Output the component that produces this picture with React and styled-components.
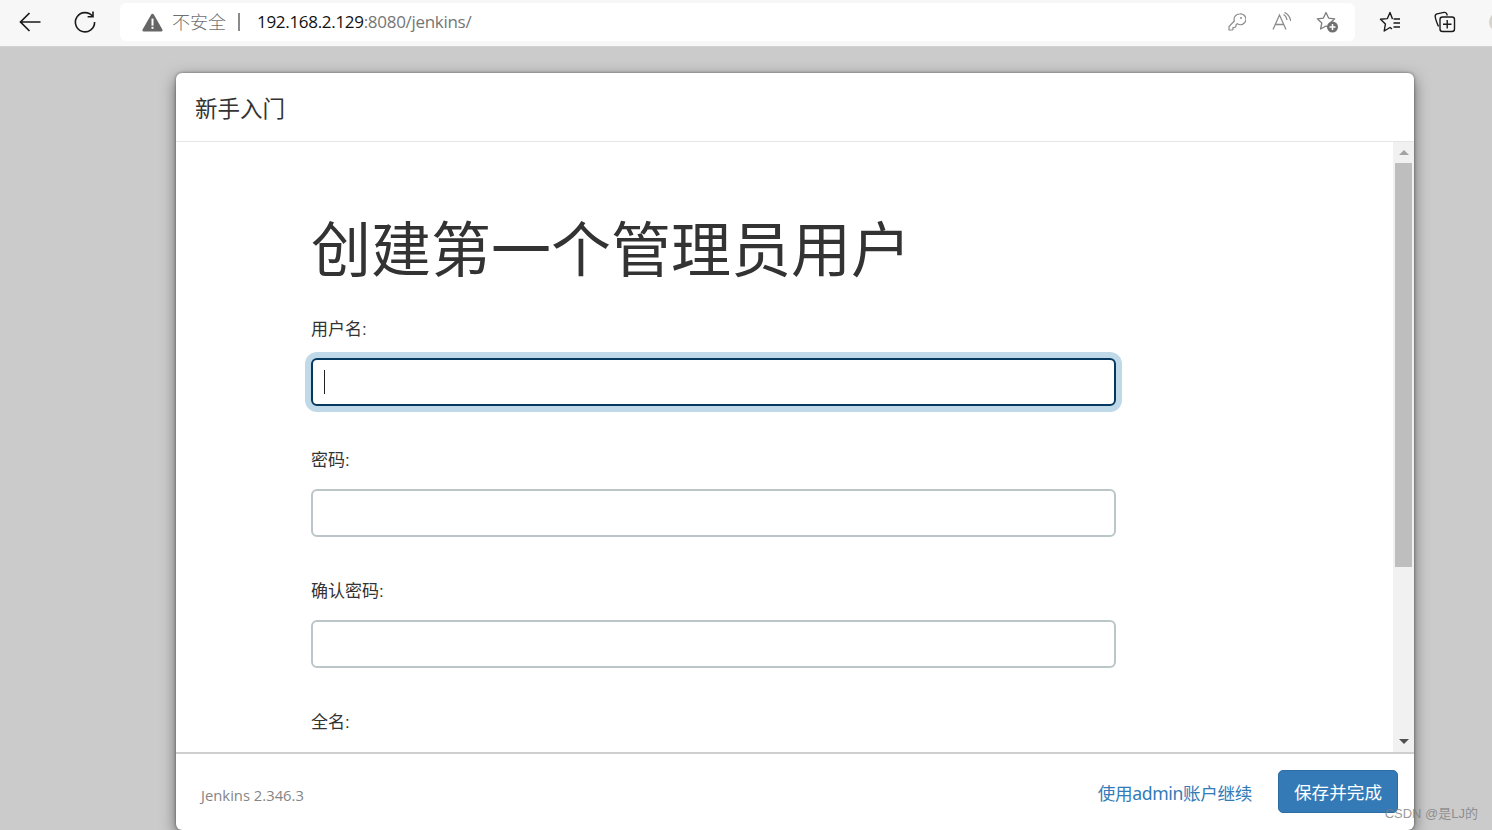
import React from 'react';
import styled, { createGlobalStyle } from 'styled-components';

const Global = createGlobalStyle`
  html, body { margin: 0; padding: 0; height: 100%; overflow: hidden; }
  body { font-family: "Liberation Sans", "Noto Sans CJK SC", sans-serif; background: #cbcbcb; }
  * { box-sizing: border-box; }
`;

const Page = styled.div`
  width: 1492px;
  height: 830px;
  display: flex;
  flex-direction: column;
  overflow: hidden;
  position: relative;
`;

const Toolbar = styled.div`
  height: 47px;
  flex: none;
  display: flex;
  align-items: flex-start;
  background: #f7f7f7;
  border-bottom: 1px solid #d2d2d2;
  padding-top: 3px;
  position: relative;
  z-index: 2;
`;

const NavButton = styled.div`
  width: ${(p) => p.$w}px;
  height: 38px;
  flex: none;
  display: flex;
  align-items: center;
  justify-content: center;
`;

const AddressBar = styled.div`
  width: 1235px;
  height: 38px;
  flex: none;
  background: #fff;
  border-radius: 6px;
  display: flex;
  align-items: center;
  padding-left: 22px;
  margin-left: 10px;
  margin-right: 12px;
  font-family: "Open Sans", "Noto Sans CJK SC", sans-serif;
`;

const Insecure = styled.span`
  font-size: 18px;
  color: #6f6f6f;
  font-family: "Noto Sans CJK SC", sans-serif;
  font-weight: 300;
  margin-left: 9px;
  margin-top: -2px;
`;

const Divider = styled.span`
  width: 2px;
  height: 18px;
  background: #8a8a8a;
  margin: 0 17px 0 12px;
`;

const Url = styled.span`
  font-size: 17px;
  color: #767676;
  letter-spacing: -0.3px;
  margin-top: -2px;
  & b { font-weight: 400; color: #111; }
`;

const BarIcons = styled.div`
  margin-left: auto;
  display: flex;
  align-items: center;
  gap: 25px;
  padding-right: 16px;
`;

const Backdrop = styled.div`
  flex: 1;
  padding: 26px 78px 0 176px;
  display: flex;
  min-height: 0;
`;

const Dialog = styled.div`
  width: 1238px;
  height: 757px;
  background: #fff;
  border-radius: 6px;
  box-shadow: 0 5px 15px rgba(0, 0, 0, 0.5), 0 0 3px rgba(0, 0, 0, 0.45);
  display: flex;
  flex-direction: column;
  overflow: hidden;
`;

const DialogHeader = styled.div`
  height: 69px;
  flex: none;
  border-bottom: 1px solid #e5e5e5;
  display: flex;
  align-items: center;
  padding-left: 19px;
  font-size: 22.5px;
  color: #333;
  font-family: "Noto Sans CJK SC", sans-serif;
  font-weight: 400;
`;

const DialogBody = styled.div`
  flex: 1;
  min-height: 0;
  display: flex;
  overflow: hidden;
`;

const Form = styled.div`
  flex: 1;
  padding: 62px 0 0 135px;
  margin-bottom: 1px;
  overflow: hidden;
`;

const Title = styled.h1`
  margin: 0 0 30px;
  font-size: 60px;
  line-height: 84px;
  font-weight: 400;
  color: #333;
  font-family: "Noto Sans CJK SC", sans-serif;
`;

const Field = styled.div`
  margin-bottom: 43px;
`;

const Label = styled.label`
  display: block;
  height: 24px;
  line-height: 24px;
  margin-bottom: 16px;
  font-size: 17px;
  color: #333;
  font-weight: 400;
  font-family: "Liberation Sans", "Noto Sans CJK SC", sans-serif;
`;

const Input = styled.div`
  width: 805px;
  height: 48px;
  border-radius: 6px;
  background: #fff;
  border: 2px solid ${(p) => (p.$focus ? '#05395f' : '#bcc6c9')};
  box-shadow: ${(p) => (p.$focus ? '0 0 0 6px #c0d9e8' : 'none')};
  display: flex;
  align-items: center;
  padding-left: 11px;
`;

const Caret = styled.span`
  width: 1px;
  height: 24px;
  background: #222;
`;

const Scrollbar = styled.div`
  width: 21px;
  flex: none;
  background: #f1f1f1;
  display: flex;
  flex-direction: column;
  align-items: center;
`;

const Arrow = styled.div`
  flex: none;
  height: 21px;
  display: flex;
  align-items: center;
  justify-content: center;
  &::before {
    content: '';
    border-left: 5px solid transparent;
    border-right: 5px solid transparent;
    ${(p) => (p.$down ? 'border-top: 5px solid #505050;' : 'border-bottom: 5px solid #a3a3a3;')}
  }
`;

const Thumb = styled.div`
  width: 17px;
  height: 404px;
  background: #bebebe;
`;

const Track = styled.div`
  flex: 1;
`;

const DialogFooter = styled.div`
  height: 78px;
  flex: none;
  border-top: 2px solid #cfcfcf;
  display: flex;
  align-items: center;
  padding: 0 16px 0 25px;
`;

const Version = styled.span`
  font-family: "Open Sans", sans-serif;
  font-size: 14.8px;
  color: #858585;
  margin-top: 5px;
`;

const SkipLink = styled.a`
  margin-left: auto;
  margin-right: 26px;
  font-size: 17.6px;
  color: #337ab7;
  font-weight: 400;
  font-family: "Noto Sans", "Noto Sans CJK SC", sans-serif;
  letter-spacing: -0.35px;
`;

const SaveButton = styled.button`
  width: 120px;
  height: 43px;
  border: 1px solid #2e6da4;
  border-radius: 5px;
  background: #337ab7;
  color: #fff;
  padding: 0;
  font-size: 17.6px;
  font-family: "Noto Sans CJK SC", sans-serif;
  margin-bottom: 2px;
`;

const Watermark = styled.span`
  position: absolute;
  right: 14px;
  bottom: 8px;
  font-size: 13px;
  color: rgba(125, 125, 125, 0.8);
  font-family: "Liberation Sans", "Noto Sans CJK SC", sans-serif;
`;

const Avatar = styled.span`
  position: absolute;
  right: -17px;
  top: 12px;
  width: 20px;
  height: 20px;
  border-radius: 50%;
  background: #d6d3cc;
`;

const BackIcon = () => (
  <svg width="24" height="24" viewBox="0 0 24 24" fill="none" stroke="#1a1a1a" strokeWidth="1.7">
    <path d="M22.5 12H2.5M11.5 3l-9 9 9 9" />
  </svg>
);

const ReloadIcon = () => (
  <svg width="24" height="24" viewBox="0 0 24 24" fill="none" stroke="#1a1a1a" strokeWidth="1.6">
    <path d="M19.5 6.2A9.6 9.6 0 1 0 21.6 12" />
    <path d="M20 1.5v5.2h-5.4" />
  </svg>
);

const WarnIcon = () => (
  <svg width="21" height="19" viewBox="0 0 21 19">
    <path d="M10.5 0.8c.6 0 1 .3 1.3.8l8.6 15c.5.9 0 1.8-1 1.8H1.6c-1 0-1.5-.9-1-1.8l8.6-15c.3-.5.7-.8 1.3-.8z" fill="#666" />
    <rect x="9.5" y="5.6" width="2" height="7" fill="#fff" />
    <rect x="9.5" y="13.8" width="2" height="2" fill="#fff" />
  </svg>
);

const KeyIcon = () => (
  <svg width="18" height="18" viewBox="0 0 18 18" fill="none" stroke="#8c8c8c" strokeWidth="1.2">
    <path d="M11.5 1a5.4 5.4 0 0 0-5.2 7L1 13.5V17h3.4l.6-.7v-1.8h1.8l1.3-1.4V11.6l1.3-.9A5.4 5.4 0 1 0 11.5 1z" />
    <circle cx="13" cy="5" r="1" fill="#8c8c8c" stroke="none" />
  </svg>
);

const ReadIcon = () => (
  <svg width="20" height="20" viewBox="0 0 20 20" fill="none" stroke="#8c8c8c" strokeWidth="1.3">
    <path d="M2 17.500 8.500 3l6.500 14.500M4.200 12.500h8.600" />
    <path d="M12.500 2.500c1.800.9 3 2.800 3.500 5.500M13.500.5c3.300 1.500 5.600 4.500 6.200 8.500" />
  </svg>
);

const FavAddIcon = () => (
  <svg width="23" height="22" viewBox="0 0 23 22">
    <path d="M10 1.500l2.600 5.600 6.100.7-4.500 4.200 1.200 6-5.400-3-5.400 3 1.200-6L1.300 7.800l6.100-.7z" fill="none" stroke="#7d7d7d" strokeWidth="1.3" strokeLinejoin="round" />
    <circle cx="16.500" cy="16" r="5.500" fill="#707070" />
    <path d="M16.500 13v6M13.500 16h6" stroke="#fff" strokeWidth="1.500" />
  </svg>
);

const FavListIcon = () => (
  <svg width="22" height="22" viewBox="0 0 22 22" fill="none" stroke="#1a1a1a" strokeWidth="1.4" strokeLinejoin="round">
    <path d="M13.500 8 11 1.500 8.400 7.600 1.500 8.300 6.400 13l-1.200 7 5.800-3.500 2 1.300" />
    <path d="M14.500 8H21M14.500 12H21M14.500 16H21" />
  </svg>
);

const CollectionsIcon = () => (
  <svg width="22" height="22" viewBox="0 0 22 22" fill="none" stroke="#1a1a1a" strokeWidth="1.4">
    <path d="M4.500 15.500C2.500 11 1.500 8 1.200 5.500c-.2-1.500.5-2.300 1.800-2.600l7-1.500c1.300-.2 2.300.3 2.800 1.600l.5 1.500" />
    <rect x="6" y="6" width="14.500" height="14.500" rx="2.500" />
    <path d="M13.200 9v8.500M9 13.200h8.500" />
  </svg>
);

const fields = [
  { label: '用户名:', focus: true },
  { label: '密码:' },
  { label: '确认密码:' },
  { label: '全名:' },
];

export default function App() {
  return (
    <Page>
      <Global />
      <Toolbar>
        <NavButton $w={60}><BackIcon /></NavButton>
        <NavButton $w={50}><ReloadIcon /></NavButton>
        <AddressBar>
          <WarnIcon />
          <Insecure>不安全</Insecure>
          <Divider />
          <Url><b>192.168.2.129</b>:8080/jenkins/</Url>
          <BarIcons>
            <KeyIcon />
            <ReadIcon />
            <FavAddIcon />
          </BarIcons>
        </AddressBar>
        <NavButton $w={46}><FavListIcon /></NavButton>
        <NavButton $w={64}><CollectionsIcon /></NavButton>
        <Avatar />
      </Toolbar>
      <Backdrop>
        <Dialog>
          <DialogHeader>新手入门</DialogHeader>
          <DialogBody>
            <Form>
              <Title>创建第一个管理员用户</Title>
              {fields.map((f) => (
                <Field key={f.label}>
                  <Label>{f.label}</Label>
                  <Input $focus={f.focus}>{f.focus && <Caret />}</Input>
                </Field>
              ))}
            </Form>
            <Scrollbar>
              <Arrow />
              <Thumb />
              <Track />
              <Arrow $down />
            </Scrollbar>
          </DialogBody>
          <DialogFooter>
            <Version>Jenkins 2.346.3</Version>
            <SkipLink>使用admin账户继续</SkipLink>
            <SaveButton>保存并完成</SaveButton>
          </DialogFooter>
        </Dialog>
      </Backdrop>
      <Watermark>CSDN @是LJ的</Watermark>
    </Page>
  );
}
